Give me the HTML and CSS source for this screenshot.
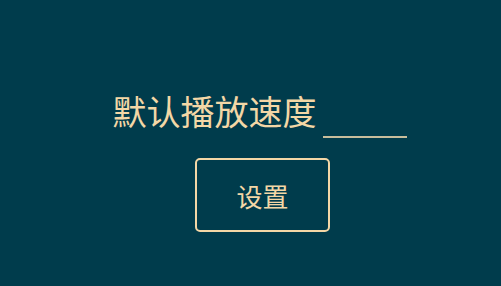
FILE: index.html
```html
<!DOCTYPE html>
<html lang="zh">
<head>
	<meta charset="UTF-8">
	<title>设置</title>
	<link rel="stylesheet" href="styles.css">
</head>
<body>
<div class="speed">
	<div class="speed-row">
		<label class="speed-row__label" for="speedInput">默认播放速度</label>
		<input id="speedInput" class="speed-row__input" type="text" />
	</div>
	<button class="speed__button" id="saveBtn">设置</button>
</div>
</body>
</html>
```

FILE: styles.css
```css
html,
body {
    margin: 0;
    height: 100%;
}

body {
    background-color: #003c4c;
    font-family: "Noto Sans CJK SC", "Noto Sans", sans-serif;
    color: #f3d7a6;
}

.speed {
    display: flex;
    flex-direction: column;
    align-items: center;
    padding-top: 88px;
    padding-left: 18px;
}

.speed-row {
    display: flex;
    align-items: flex-end;
    gap: 6px;
}

.speed-row__label {
    font-size: 34px;
    line-height: 46px;
}

.speed-row__input {
    width: 84px;
    height: 30px;
    margin-bottom: -4px;
    padding: 0;
    background: transparent;
    border: none;
    border-bottom: 2px solid #c7bd9c;
    color: #f3d7a6;
    outline: none;
}

.speed__button {
    margin-top: 24px;
    margin-left: 6px;
    width: 135px;
    height: 74px;
    background: transparent;
    border: 2px solid #f3d7a6;
    border-radius: 5px;
    color: #f3d7a6;
    font-family: inherit;
    font-size: 26px;
}
```
